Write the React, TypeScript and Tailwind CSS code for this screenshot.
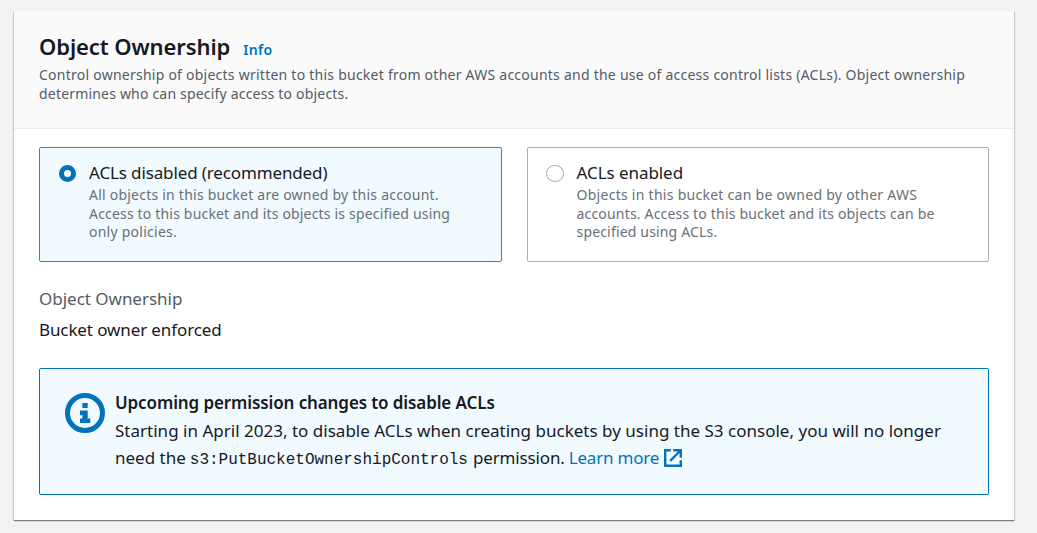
function InfoIcon() {
  return (
    <svg viewBox="0 0 40 40" className="size-10 shrink-0" aria-hidden="true">
      <circle cx="20" cy="20" r="17.5" fill="none" stroke="#0073bb" strokeWidth="5" />
      <path d="M17.4 10h5.3v5h-5.3zM15 17.5h7.7v8h2.6V30H15v-4.5h2.4v-3.2H15z" fill="#0073bb" />
    </svg>
  );
}

function ExternalIcon() {
  return (
    <svg viewBox="0 0 18 18" className="ml-[5px] size-[18px] shrink-0" fill="none" stroke="#0073bb" strokeWidth="2.4" aria-hidden="true">
      <path d="M6.8 1.2H1.2v15.6h15.6V11.2M9.2 1.2h7.6v7.6M16.5 1.5L6.2 11.8" />
    </svg>
  );
}

type Line = { text: string; tracking: string };

type OptionProps = { title: Line; lines: Line[]; checked?: boolean };

function Option({ title, lines, checked }: OptionProps) {
  return (
    <div
      className={
        checked
          ? "flex h-[115px] w-[463px] gap-[13px] rounded-[2px] border border-[#1f94a6] bg-[#f1faff] pt-[13px] pl-[19px]"
          : "flex h-[115px] w-[462px] gap-[12.5px] rounded-[2px] border border-[#aab0b3] bg-white pt-[13px] pl-[18px]"
      }
    >
      <span
        role="radio"
        aria-checked={!!checked}
        className={
          checked
            ? "mt-1 size-[17px] shrink-0 rounded-full border-[5px] border-[#0073bb] bg-white"
            : "mt-1 h-[17px] w-[18px] shrink-0 rounded-full border border-[#a0a6a9] bg-white"
        }
      />
      <div className="whitespace-nowrap">
        <div className={"text-[17px] leading-[24px] text-[#16191f] " + title.tracking}>{title.text}</div>
        <div className="mt-px text-[14px] leading-[18.6px] text-[#687078]">
          {lines.map((l) => (
            <div key={l.text} className={l.tracking}>{l.text}</div>
          ))}
        </div>
      </div>
    </div>
  );
}

export default function App() {
  return (
    <div className="h-[533px] w-[1037px] bg-[#f2f2f2] pt-[11px] pl-[14px] font-['Noto_Sans',sans-serif] text-[#16191f]">
      <section className="h-[509px] w-[1000px] bg-white shadow-[0_1px_1px_0_rgba(0,28,36,0.4),1px_1px_1px_0_rgba(0,28,36,0.12),-1px_1px_1px_0_rgba(0,28,36,0.12)]">
        <header className="h-[118px] border-b border-[#eaeded] bg-[#fafafa] pt-[21px] pl-[25px] whitespace-nowrap">
          <div className="flex h-[28px] items-baseline gap-[13px] leading-[28px]">
            <h2 className="text-[22px] font-semibold tracking-[-0.1px]">Object Ownership</h2>
            <a className="text-[14px] font-semibold tracking-[0.3px] text-[#0073bb]">Info</a>
          </div>
          <div className="mt-[5px] text-[14px] leading-[19px] text-[#545b64]">
            <div className="tracking-[0.244px]">
              Control ownership of objects written to this bucket from other AWS accounts and the use of access control lists (ACLs). Object ownership
            </div>
            <div className="tracking-[0.19px]">determines who can specify access to objects.</div>
          </div>
        </header>
        <div className="px-[25px] pt-[18px] whitespace-nowrap">
          <div className="flex gap-[25px]">
            <Option
              checked
              title={{ text: "ACLs disabled (recommended)", tracking: "tracking-[-0.13px]" }}
              lines={[
                { text: "All objects in this bucket are owned by this account.", tracking: "tracking-[0.23px]" },
                { text: "Access to this bucket and its objects is specified using", tracking: "tracking-[0.18px]" },
                { text: "only policies.", tracking: "tracking-[0.25px]" },
              ]}
            />
            <Option
              title={{ text: "ACLs enabled", tracking: "tracking-[-0.06px]" }}
              lines={[
                { text: "Objects in this bucket can be owned by other AWS", tracking: "tracking-[0.275px]" },
                { text: "accounts. Access to this bucket and its objects can be", tracking: "tracking-[0.18px]" },
                { text: "specified using ACLs.", tracking: "tracking-[0.17px]" },
              ]}
            />
          </div>
          <div className="mt-[23px] text-[17px] leading-[27px]">
            <div className="tracking-[-0.02px] text-[#545b64]">Object Ownership</div>
            <div className="mt-1 tracking-[-0.11px]">Bucket owner enforced</div>
          </div>
          <div className="mt-[25px] flex h-[127px] gap-[10px] rounded-[2px] border border-[#0073bb] bg-[#f1faff] pt-5 pl-[25px] text-[17px] leading-[27.5px]">
            <div className="pt-1">
              <InfoIcon />
            </div>
            <div>
              <div className="font-semibold tracking-[-0.11px]">Upcoming permission changes to disable ACLs</div>
              <div className="tracking-[0.012px]">
                Starting in April 2023, to disable ACLs when creating buckets by using the S3 console, you will no longer
              </div>
              <div className="flex items-baseline">
                <span>need the</span>
                <code className="ml-1 font-['Liberation_Mono',monospace] text-[16px] tracking-[-0.01px]">s3:PutBucketOwnershipControls</code>
                <span className="ml-[5px] tracking-[-0.15px]">permission.</span>
                <a className="ml-1 flex items-center tracking-[-0.19px] text-[#0073bb]">
                  Learn more
                  <ExternalIcon />
                </a>
              </div>
            </div>
          </div>
        </div>
      </section>
    </div>
  );
}
